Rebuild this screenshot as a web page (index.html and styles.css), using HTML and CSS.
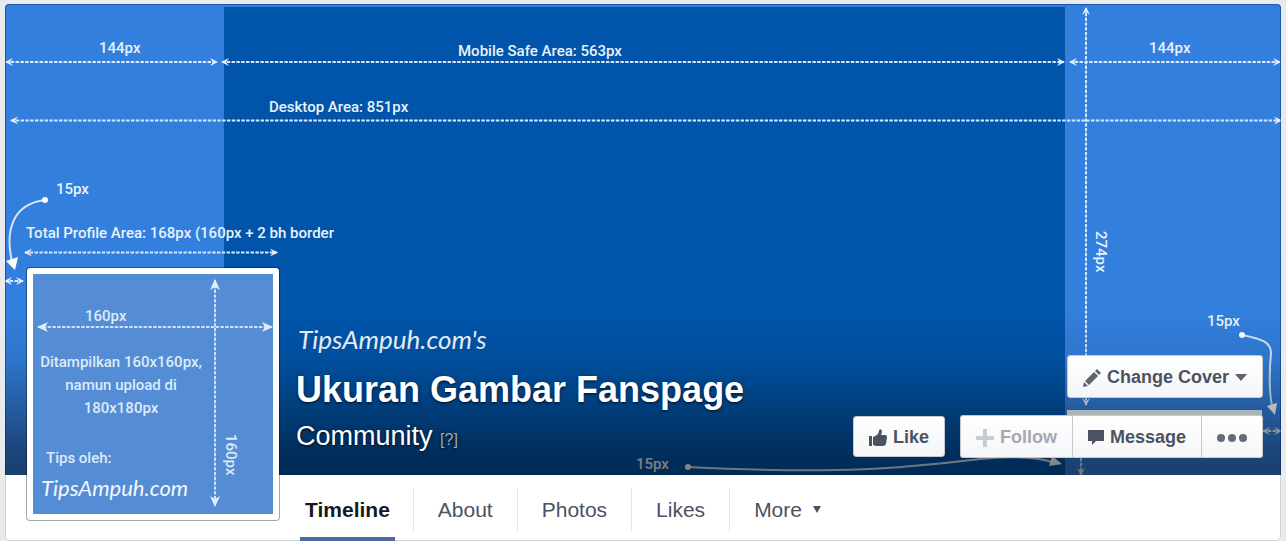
FILE: index.html
```html
<!DOCTYPE html>
<html lang="en">
<head>
<meta charset="utf-8">
<title>Ukuran Gambar Fanspage</title>
<link rel="stylesheet" href="styles.css">
</head>
<body>
<main class="profile">
  <header class="cover">
    <svg class="cover-art" viewBox="5 4 1276 471" preserveAspectRatio="xMidYMid slice">
      <defs>
        <marker id="tip" viewBox="-10 -5 10 10" markerWidth="10" markerHeight="10" refX="-1" refY="0" orient="auto-start-reverse" markerUnits="userSpaceOnUse"><path d="M0 0L-8 -4L-5 0L-8 4z" fill="#e6effb"/></marker>
        <marker id="tip-large" viewBox="-12 -6 12 12" markerWidth="12" markerHeight="12" refX="-1" refY="0" orient="auto-start-reverse" markerUnits="userSpaceOnUse"><path d="M0 0L-11 -5L-8 0L-11 5z" fill="#e2edf9"/></marker>
        <linearGradient id="shade" x1="0" y1="0" x2="0" y2="1">
          <stop offset="0" stop-color="#000" stop-opacity="0"/>
          <stop offset=".3" stop-color="#000" stop-opacity=".08"/>
          <stop offset=".85" stop-color="#000" stop-opacity=".45"/>
          <stop offset="1" stop-color="#000" stop-opacity=".5"/>
        </linearGradient>
      </defs>
      <rect x="5" y="4" width="1276" height="471" fill="#327fdd"/>
      <rect x="224" y="7" width="841" height="468" fill="#0055aa"/>
      <rect x="1065" y="7" width="2" height="468" fill="#3d7fd6"/>
      <g class="rule">
        <path d="M6 62H217"/>
        <path d="M222 62H1064"/>
        <path d="M1070 62H1280"/>
        <path d="M11 120.500H1281"/>
        <path d="M25 252.500H277"/>
        <path d="M5 281H23"/>
        <path d="M1086 8V405"/>
        <path d="M1263 431H1281"/>
        <path class="one-way" d="M1081 458V475"/>
      </g>
      <g class="curve">
        <path d="M45 200C12 204 5 231 12 262"/>
        <path d="M1242 335C1262 339 1271 342 1271 353C1269 374 1269 391 1272 406"/>
        <path d="M688 467C850 475 910 467 980 459C1010 456 1035 457 1052 462"/>
      </g>
      <g fill="#fff">
        <circle cx="45" cy="200" r="3"/><circle cx="1242" cy="335" r="3"/><circle cx="688" cy="467" r="3"/>
        <path d="M6 261L18 257L15 270zM1267 406L1277 403L1275 415zM1049 466L1052 456L1062 464z"/>
      </g>
      <g class="note">
        <text x="99" y="53">144px</text>
        <text x="458" y="56">Mobile Safe Area: 563px</text>
        <text x="1149" y="53">144px</text>
        <text x="269" y="112">Desktop Area: 851px</text>
        <text x="56" y="194">15px</text>
        <text x="26" y="238">Total Profile Area: 168px (160px + 2 bh border</text>
        <text x="1207" y="326">15px</text>
        <text x="636" y="469">15px</text>
        <text transform="translate(1096 231) rotate(90)">274px</text>
      </g>
      <text class="script" x="298" y="349">TipsAmpuh.com's</text>
      <rect x="5" y="310" width="1276" height="165" fill="url(#shade)"/>
      <rect x="1067" y="410" width="195" height="8" fill="#a9b5b8"/>
    </svg>
    <div class="identity">
      <h1>Ukuran Gambar Fanspage</h1>
      <p>Community <a href="#" class="help">[?]</a></p>
    </div>
    <div class="actions">
      <button class="btn change" type="button">
        <svg width="18" height="18" viewBox="0 0 18 18" fill="#5d6470"><path d="M0 18L1 13L5 17zM2 12L11 3L15 7L6 16zM12 2L14 0L18 4L16 6z"/></svg>
        Change Cover
        <svg width="12" height="8" viewBox="0 0 12 8" fill="#5d6470"><path d="M0 0H12L6 7z"/></svg>
      </button>
      <div class="row">
        <button class="btn like" type="button">
          <svg width="18" height="18" viewBox="0 0 18 18" fill="#4b5261"><path d="M0 7H3V17H0zM4 8L8 6L10 3V1Q12-1 13 2Q13 4 12 6H16Q18 6 18 8L17 15Q16 17 14 17H7L4 16z"/></svg>
          Like
        </button>
        <div class="group">
          <button class="btn follow" type="button" disabled>
            <svg width="18" height="18" viewBox="0 0 18 18" fill="#c9ccd1"><path d="M7 0H11V7H18V11H11V18H7V11H0V7H7z"/></svg>
            Follow
          </button>
          <button class="btn message" type="button">
            <svg width="16" height="16" viewBox="0 0 16 16" fill="#4b5261"><path d="M0 0H16V11H8L4 15V11H0z"/></svg>
            Message
          </button>
          <button class="btn dots" type="button" aria-label="More actions">
            <svg width="30" height="8" viewBox="0 0 30 8" fill="#646c7b"><circle cx="4" cy="4" r="4"/><circle cx="15" cy="4" r="4"/><circle cx="26" cy="4" r="4"/></svg>
          </button>
        </div>
      </div>
    </div>
  </header>
  <a class="picture" href="#" aria-label="Profile picture">
    <svg viewBox="33 274 240 240">
      <rect x="33" y="274" width="240" height="240" fill="#548dd5"/>
      <g class="rule rule-large"><path d="M38 327H272"/><path d="M215 280V506"/></g>
      <g class="note note-soft">
        <text x="85" y="321">160px</text>
        <g text-anchor="middle">
          <text x="121" y="367">Ditampilkan 160x160px,</text>
          <text x="121" y="390">namun upload di</text>
          <text x="121" y="413">180x180px</text>
        </g>
        <text x="46" y="463">Tips oleh:</text>
        <text transform="translate(226 434) rotate(90)">160px</text>
      </g>
      <text class="script script-small" x="41" y="496">TipsAmpuh.com</text>
    </svg>
  </a>
  <nav class="tabs">
    <a class="tab current" href="#"><span>Timeline</span></a>
    <a class="tab" href="#">About</a>
    <a class="tab" href="#">Photos</a>
    <a class="tab" href="#">Likes</a>
    <a class="tab" href="#">More <svg width="8" height="8" viewBox="0 0 8 8" fill="#4b5261"><path d="M0 0H8L4 7z"/></svg></a>
  </nav>
</main>
</body>
</html>
```
FILE: styles.css
```css
* { box-sizing: border-box; }

body {
  margin: 0;
  padding: 4px 5px 0;
  background: #e9eaed;
  font-family: "Liberation Sans", Arial, sans-serif;
}

.profile {
  display: grid;
  grid-template-columns: 275px 1fr;
  grid-template-rows: auto auto;
  background: #fff;
  border-radius: 5px;
  box-shadow: inset 0 0 0 1px #cfd2d8;
}

.cover {
  grid-area: 1 / 1 / 2 / 3;
  position: relative;
  display: flex;
  justify-content: space-between;
  align-items: flex-end;
  min-height: 471px;
  padding: 0 18px 17px 291px;
  border-radius: 4px 4px 0 0;
  overflow: hidden;
}

.cover::after {
  content: "";
  position: absolute;
  inset: 0;
  border: 1px solid rgba(0, 30, 80, 0.4);
  border-bottom: 0;
  border-radius: 4px 4px 0 0;
  pointer-events: none;
}

.cover-art {
  position: absolute;
  inset: 0;
  width: 100%;
  height: 100%;
}

.rule path {
  fill: none;
  stroke: #dce9fa;
  stroke-width: 2;
  stroke-dasharray: 3.4 1.4;
  marker-start: url(#tip);
  marker-end: url(#tip);
}

.rule .one-way { marker-start: none; }

.rule-large path {
  stroke: #cfe2f8;
  marker-start: url(#tip-large);
  marker-end: url(#tip-large);
}

.curve path {
  fill: none;
  stroke: #d5e4f8;
  stroke-width: 2;
}

.note {
  fill: #e9f1fb;
  font: 500 15px Roboto, sans-serif;
}

.note-soft { fill: #dcebfa; }

.script {
  fill: #f2f7fd;
  font: italic 400 26px Lato, sans-serif;
}

.script-small { font-size: 22px; }

.identity {
  position: relative;
  padding-bottom: 2px;
  color: #fff;
  text-shadow: 0 1px 3px rgba(0, 0, 0, 0.8);
}

.identity h1 {
  margin: 0 0 9px;
  font-size: 36px;
  line-height: 42px;
}

.identity p {
  margin: 0;
  font-size: 27px;
  line-height: 32px;
}

.help {
  color: #a3a7ad;
  font-size: 16px;
  text-decoration: none;
}

.actions {
  position: relative;
  display: flex;
  flex-direction: column;
  align-items: flex-end;
  gap: 17px;
}

.row {
  display: flex;
  align-items: center;
  gap: 15px;
}

.group { display: flex; }

.btn {
  display: flex;
  align-items: center;
  justify-content: center;
  gap: 6px;
  height: 43px;
  padding: 2px 15px 0;
  border: 1px solid #c5c8ce;
  border-radius: 3px;
  background: linear-gradient(#fff, #f4f5f7);
  color: #4b5261;
  font: bold 18px "Liberation Sans", Arial, sans-serif;
}

.like { height: 41px; }

.group .btn { border-radius: 0; }

.group .follow {
  border-right: 0;
  border-radius: 3px 0 0 3px;
  color: #a6a9af;
}

.group .dots {
  border-left: 0;
  border-radius: 0 3px 3px 0;
}

.picture {
  grid-area: 1 / 1 / 3 / 2;
  position: relative;
  align-self: end;
  justify-self: end;
  width: 254px;
  height: 254px;
  margin-bottom: 20px;
  padding: 6px;
  border: 1px solid rgba(0, 0, 0, 0.35);
  border-radius: 4px;
  background: #fff;
  background-clip: padding-box;
}

.picture svg {
  display: block;
  width: 100%;
}

.tabs {
  grid-area: 2 / 2 / 3 / 3;
  display: flex;
  align-items: flex-start;
  height: 66px;
}

.tab {
  height: 44px;
  margin-top: 13px;
  padding: 0 24px;
  border-right: 1px solid #e6e7ea;
  color: #4b5261;
  font-size: 21px;
  line-height: 44px;
  text-decoration: none;
}

.tab:last-child { border-right: 0; }

.tab svg { margin: 0 0 3px 5px; }

.current {
  padding: 0 18px 0 20px;
  color: #16181c;
  font-weight: bold;
}

.current span {
  display: block;
  height: 53px;
  padding: 0 5px;
  border-bottom: 4px solid #4e69a2;
}
```
